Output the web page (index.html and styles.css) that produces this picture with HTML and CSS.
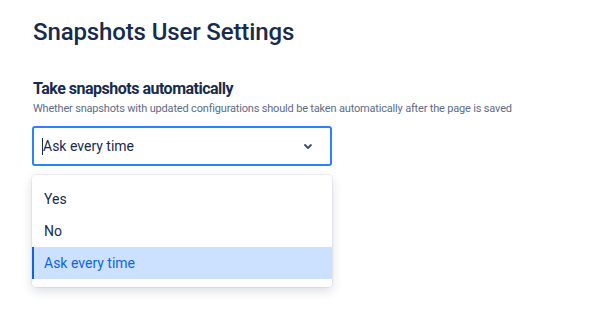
FILE: index.html
```html
<!DOCTYPE html>
<html lang="en">
<head>
    <meta charset="UTF-8">
    <meta name="viewport" content="width=device-width, initial-scale=1.0">
    <title>Snapshots User Settings</title>
    <link rel="stylesheet" href="styles.css">
</head>
<body>
    <div class="page">
        <h1>Snapshots User Settings</h1>
        <div class="field">
            <h3>Take snapshots automatically</h3>
            <p class="help">Whether snapshots with updated configurations should be taken automatically after the page is saved</p>
            <div class="select">
                <div class="control">
                    <span class="caret"></span>
                    <span class="current">Ask every time</span>
                    <svg class="chevron" width="24" height="24" viewBox="0 0 24 24">
                        <path d="M8.3 10.3a1 1 0 0 1 1.4 0L12 12.6l2.3-2.3a1 1 0 0 1 1.4 1.4l-3 3a1 1 0 0 1-1.4 0l-3-3a1 1 0 0 1 0-1.4z" fill="#42526E"/>
                    </svg>
                </div>
                <ul class="menu">
                    <li>Yes</li>
                    <li>No</li>
                    <li class="selected">Ask every time</li>
                </ul>
            </div>
        </div>
    </div>
</body>
</html>
```

FILE: styles.css
```css
body {
    margin: 0;
    font-family: Roboto, "Noto Sans", sans-serif;
    color: #172B4D;
    background: #fff;
}
.page {
    padding: 18px 33px;
}
h1 {
    margin: 0 0 33px;
    font-size: 24px;
    line-height: 28px;
    font-weight: 500;
    letter-spacing: -0.13px;
}
h3 {
    margin: 0;
    font-size: 16px;
    line-height: 20px;
    font-weight: 700;
    letter-spacing: -0.5px;
}
.help {
    margin: 2px 0 9px;
    font-size: 11px;
    line-height: 16px;
    color: #5E6C84;
    letter-spacing: -0.18px;
}
.select {
    width: 300px;
    margin-left: -1px;
}
.control {
    display: flex;
    align-items: center;
    height: 40px;
    box-sizing: border-box;
    border: 2px solid #2684FF;
    border-radius: 3px;
    padding: 0 8px;
    font-size: 14px;
}
.caret {
    width: 1px;
    height: 17px;
    background: #172B4D;
}
.current {
    flex: 1;
}
.chevron {
    margin-right: 2px;
}
.menu {
    list-style: none;
    margin: 9px 0 0;
    padding: 8px 0;
    border-radius: 4px;
    box-shadow: 0 4px 11px rgba(9, 30, 66, 0.15), 0 0 0 1px rgba(9, 30, 66, 0.06);
    font-size: 14px;
}
.menu li {
    height: 32px;
    line-height: 32px;
    padding: 0 10px;
    border-left: 2px solid transparent;
}
.menu li.selected {
    background: #CCE0FF;
    border-left-color: #0C66E4;
    color: #0C66E4;
}
```
